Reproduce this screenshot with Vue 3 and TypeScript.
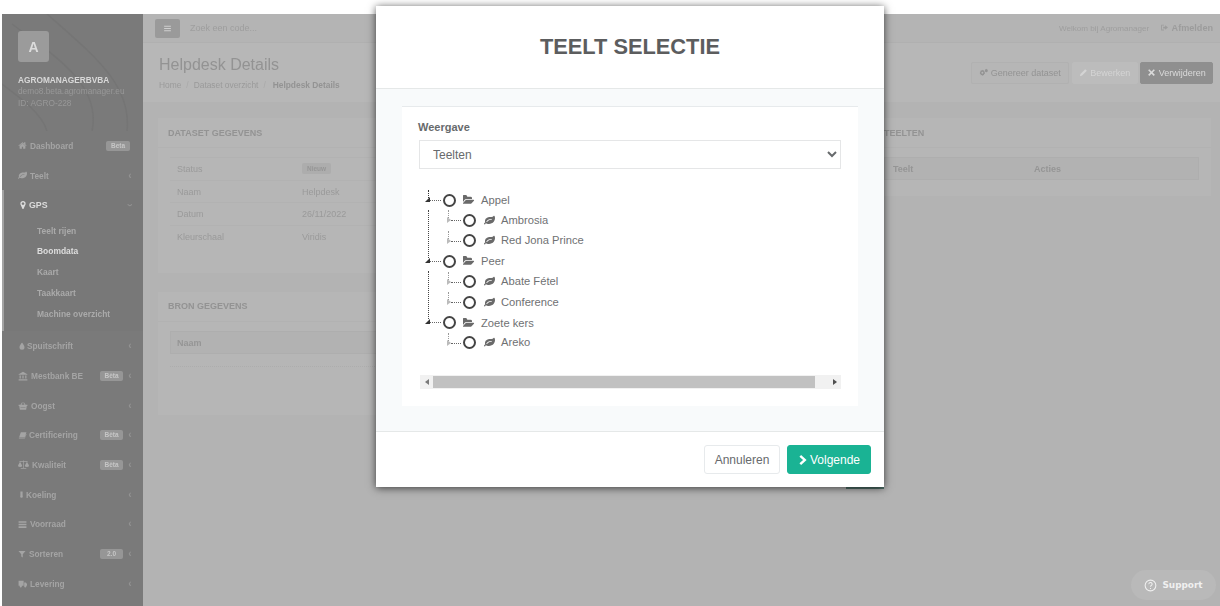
<script setup lang="ts">
interface Icon { vb: string; d: string }
const icons: Record<string, Icon> = {
  home: { vb: '0 0 1792 1792', d: 'M1472 992v480q0 26-19 45t-45 19h-384v-384h-256v384h-384q-26 0-45-19t-19-45v-480q0-1 .5-3t.5-3l575-474 575 474q1 2 1 6zm223-69l-62 74q-8 9-21 11h-3q-13 0-21-7l-692-577-692 577q-12 8-24 7-13-2-21-11l-62-74q-8-10-7-23.500t11-21.500l719-599q32-26 76-26t76 26l244 204v-195q0-14 9-23t23-9h192q14 0 23 9t9 23v408l219 182q10 8 11 21.500t-7 23.500z' },
  leaf: { vb: '0 0 1792 1792', d: 'M1280 704q0-26-19-45t-45-19q-172 0-318 49.500t-259.500 134-235.500 219.500q-19 21-19 45 0 26 19 45t45 19q24 0 45-19 27-24 74-71t67-66q137-124 268.500-176t313.500-52q26 0 45-19t19-45zm512-198q0 95-20 193-46 224-184.500 383t-357.500 268q-214 108-438 108-148 0-286-47-15-5-88-42t-96-37q-16 0-39.500 32t-45 70-52.500 70-60 32q-30 0-51-11t-31-24-27-42q-2-4-6-11t-5.500-10-3-9.500-1.500-13.500q0-35 31-73.500t68-65.500 68-56 31-48q0-4-14-38t-16-44q-9-51-9-104 0-115 43.500-220t119-184.500 170.500-139 204-95.500q55-18 145-25.500t179.500-9 178.500-6 163.500-24 113.500-56.500l29.500-29.500 29.500-28 27-20 36.500-16 43.500-4.500q39 0 70.500 46t47.500 112 24 124 8 96z' },
  folder: { vb: '0 128 1920 1536', d: 'M1781 931q0 35-31 66l-336 396q-43 51-120.500 86.500t-143.500 35.500h-1088q-34 0-60.500-13t-26.500-43q0-35 31-66l336-396q43-51 120.500-86.500t143.500-35.500h1088q34 0 60.500 13t26.500 43zm-343-344v160h-832q-94 0-197 47.500t-164 119.500l-337 396-5 6q0-4-.5-12.500t-.5-12.500v-960q0-92 66-158t158-66h320q92 0 158 66t66 158v32h544q92 0 158 66t66 158z' },
  marker: { vb: '0 128 1024 1536', d: 'M768 640q0-106-75-181t-181-75-181 75-75 181 75 181 181 75 181-75 75-181zm256 0q0 109-33 179l-364 774q-16 33-47.500 52t-67.500 19-67.500-19-46.500-52l-365-774q-33-70-33-179 0-212 150-362t362-150 362 150 150 362z' },
  tint: { vb: '0 0 16 16', d: 'M8 1C8 1 3 7 3 10.500a5 5 0 0 0 10 0C13 7 8 1 8 1z' },
  bank: { vb: '0 0 16 16', d: 'M8 1l7 4v1H1V5zM2.500 7h2v5h-2zM7 7h2v5H7zM11.500 7h2v5h-2zM1 13h14v2H1z' },
  basket: { vb: '0 0 16 16', d: 'M1 6h3l2.500-4 1 .6L5.500 6h5L8.500 2.600l1-.6L12 6h3v2h-1l-1 6H3L2 8H1zM4 9.500v1h8v-1z' },
  book: { vb: '0 0 16 16', d: 'M5 2h10l-3 9H2zM1.500 12H12l2.500-7 .5 1-3 7.500H2a1.500 1.500 0 0 1-.5-1.500z' },
  scale: { vb: '0 0 16 16', d: 'M7.500 2h1v11h-1zM2 3h12v1H2zM4 13h8v1H4zM3 4L0 9.500a3 2.200 0 0 0 6 0zM3 5.500L1.200 9h3.600zM13 4l-3 5.500a3 2.200 0 0 0 6 0zM13 5.500L11.200 9h3.600z' },
  cold: { vb: '0 0 16 16', d: 'M5.500 1h5v9.500a3.300 3.300 0 0 1 .5 2 3 3 0 0 1-6 0 3.300 3.300 0 0 1 .5-2z' },
  list: { vb: '0 0 16 16', d: 'M1 2h14v3H1zM1 6.500h14v3H1zM1 11h14v3H1z' },
  filter: { vb: '0 0 16 16', d: 'M1 2h14L9.500 8.500V15l-3-2V8.500z' },
  truck: { vb: '0 0 16 16', d: 'M1 3h9v9H1zM11 6h3l2 3v3h-5zM4.500 11a2 2 0 1 1 0 3.900 2 2 0 0 1 0-3.900zM12.500 11a2 2 0 1 1 0 3.900 2 2 0 0 1 0-3.900z' },
  gears: { vb: '0 0 16 16', d: 'M6 3l1 1.500 1.700-.3.500 2 1.500.8-.8 1.500.8 1.500-1.500.8-.5 2-1.700-.3L6 14l-1-1.500-1.700.3-.5-2L1.300 10l.8-1.500L1.300 7l1.500-.8.500-2 1.700.3zM6 6.800a1.700 1.700 0 1 0 0 3.400 1.700 1.700 0 0 0 0-3.400zM13 1.500l.6.900 1-.2.300 1.100.9.500-.5.900.5.900-.9.500-.3 1.100-1-.2-.6.900-.6-.9-1 .2-.3-1.100-.9-.5.500-.9-.5-.9.900-.5.300-1.100 1 .2z' },
  pencil: { vb: '0 0 16 16', d: 'M11 2l3 3-8.500 8.500-4 1 1-4z' },
  times: { vb: '0 0 16 16', d: 'M4 2l4 4 4-4 2 2-4 4 4 4-2 2-4-4-4 4-2-2 4-4-4-4z' },
  signout: { vb: '0 0 16 16', d: 'M2 3h5v1.500H3.500v7H7V13H2zM9 4l5 4-5 4V9.500H5.500v-3H9z' },
  bars: { vb: '0 0 16 16', d: 'M2 3h12v2H2zM2 7h12v2H2zM2 11h12v2H2z' },
  next: { vb: '0 0 16 16', d: 'M4.500 .8L12.500 8l-8 7.200-2.400-2.400L7.400 8 2.100 3.200z' },
}

interface MenuItem { label: string; icon: string; slot: number; size: number; badge?: string; wide?: boolean }
const menuTop: MenuItem[] = [
  { label: 'Dashboard', icon: 'home', slot: 12, size: 9, badge: 'Beta', wide: true },
  { label: 'Teelt', icon: 'leaf', slot: 12, size: 9 },
]
const subItems = ['Teelt rijen', 'Boomdata', 'Kaart', 'Taakkaart', 'Machine overzicht']
const menuBottom: MenuItem[] = [
  { label: 'Spuitschrift', icon: 'tint', slot: 9, size: 8 },
  { label: 'Mestbank BE', icon: 'bank', slot: 13, size: 10, badge: 'Bèta' },
  { label: 'Oogst', icon: 'basket', slot: 13, size: 10 },
  { label: 'Certificering', icon: 'book', slot: 11, size: 9, badge: 'Bèta' },
  { label: 'Kwaliteit', icon: 'scale', slot: 14, size: 11, badge: 'Bèta' },
  { label: 'Koeling', icon: 'cold', slot: 8, size: 7 },
  { label: 'Voorraad', icon: 'list', slot: 12, size: 9 },
  { label: 'Sorteren', icon: 'filter', slot: 11, size: 8, badge: '2.0' },
  { label: 'Levering', icon: 'truck', slot: 12, size: 9 },
]
const details = [
  { k: 'Status', v: 'Nieuw', tag: true },
  { k: 'Naam', v: 'Helpdesk' },
  { k: 'Datum', v: '26/11/2022' },
  { k: 'Kleurschaal', v: 'Viridis' },
]
const tree = [
  { name: 'Appel', kids: ['Ambrosia', 'Red Jona Prince'] },
  { name: 'Peer', kids: ['Abate Fétel', 'Conference'] },
  { name: 'Zoete kers', kids: ['Areko'] },
]
</script>

<template>
  <div class="screen">
    <div class="app">
      <aside class="side">
        <div class="brand">
          <svg class="waves" viewBox="0 0 141 117" fill="none">
            <path d="M10 10C50 40 100 70 90 117M45 0C90 40 130 70 125 117M0 70C20 85 40 100 45 117" />
          </svg>
          <div class="logo">A</div>
          <div class="company">AGROMANAGERBVBA</div>
          <div class="muted">demo8.beta.agromanager.eu</div>
          <div class="muted">ID: AGRO-228</div>
        </div>
        <nav>
          <a v-for="m in menuTop" :key="m.label" class="item">
            <span class="slot" :style="{ width: m.slot + 'px' }">
              <svg class="ic" :style="{ fontSize: m.size + 'px' }" :viewBox="icons[m.icon].vb"><path :d="icons[m.icon].d" /></svg>
            </span>
            <span class="lbl">{{ m.label }}</span>
            <span v-if="m.badge" class="badge" :class="{ wide: m.wide }">{{ m.badge }}</span>
            <span v-if="!m.wide" class="chev">‹</span>
          </a>
          <div class="group">
            <a class="item active">
              <span class="slot gps"><svg class="ic" :viewBox="icons.marker.vb"><path :d="icons.marker.d" /></svg></span>
              <span class="lbl">GPS</span>
              <span class="chev down">‹</span>
            </a>
            <a v-for="(s, i) in subItems" :key="s" class="sub" :class="{ on: i === 1 }">{{ s }}</a>
          </div>
          <a v-for="m in menuBottom" :key="m.label" class="item">
            <span class="slot" :style="{ width: m.slot + 'px' }">
              <svg class="ic" :style="{ fontSize: m.size + 'px' }" :viewBox="icons[m.icon].vb"><path :d="icons[m.icon].d" /></svg>
            </span>
            <span class="lbl">{{ m.label }}</span>
            <span v-if="m.badge" class="badge">{{ m.badge }}</span>
            <span class="chev">‹</span>
          </a>
        </nav>
      </aside>

      <main class="main">
        <header class="topbar">
          <button class="burger"><svg class="ic" :viewBox="icons.bars.vb"><path :d="icons.bars.d" /></svg></button>
          <span class="search">Zoek een code...</span>
          <span class="welcome">Welkom bij Agromanager</span>
          <span class="logout">
            <svg class="ic" :viewBox="icons.signout.vb"><path :d="icons.signout.d" /></svg> Afmelden
          </span>
        </header>
        <section class="heading">
          <div>
            <h2>Helpdesk Details</h2>
            <div class="crumbs">
              <span>Home</span><i>/</i><span>Dataset overzicht</span><i>/</i><b>Helpdesk Details</b>
            </div>
          </div>
          <div class="actions">
            <button class="act plain"><svg class="ic" :viewBox="icons.gears.vb"><path :d="icons.gears.d" /></svg> Genereer dataset</button>
            <button class="act light"><svg class="ic" :viewBox="icons.pencil.vb"><path :d="icons.pencil.d" /></svg> Bewerken</button>
            <button class="act dark"><svg class="ic" :viewBox="icons.times.vb"><path :d="icons.times.d" /></svg> Verwijderen</button>
          </div>
        </section>
        <section class="content">
          <div class="col">
            <article class="card first">
              <h5>DATASET GEGEVENS</h5>
              <div class="card-body">
                <div v-for="d in details" :key="d.k" class="row">
                  <span class="key">{{ d.k }}</span>
                  <span v-if="d.tag" class="tag">{{ d.v }}</span>
                  <span v-else>{{ d.v }}</span>
                </div>
              </div>
            </article>
            <article class="card second">
              <h5>BRON GEGEVENS</h5>
              <div class="card-body">
                <div class="thead"><span>Naam</span></div>
                <div class="dots"></div>
              </div>
            </article>
          </div>
          <div class="col narrow">
            <article class="card third">
              <h5>TEELTEN</h5>
              <div class="card-body">
                <div class="thead split"><span>Teelt</span><span>Acties</span></div>
              </div>
            </article>
          </div>
        </section>
      </main>
    </div>

    <div class="peek"></div>
    <button class="support">
      <svg class="q" viewBox="0 0 16 16" fill="none"><circle cx="8" cy="8" r="6.600" /><path d="M6 6.300a2 2 0 1 1 3 1.700c-.7.400-1 .8-1 1.600M8 11v1.400" /></svg>
      Support
    </button>

    <div class="modal">
      <header class="m-head"><h3>TEELT SELECTIE</h3></header>
      <div class="m-body">
        <div class="panel">
          <label class="field-label" for="view">Weergave</label>
          <select id="view" class="select"><option>Teelten</option></select>
          <div class="tree">
            <div v-for="(n, idx) in tree" :key="n.name" class="node">
              <div class="t-row">
                <span class="stem" :class="{ head: idx === 0 }"></span>
                <span class="tri"></span>
                <span class="dash"></span>
                <span class="radio"></span>
                <svg class="t-folder" :viewBox="icons.folder.vb"><path :d="icons.folder.d" /></svg>
                <span class="t-text">{{ n.name }}</span>
              </div>
              <div v-for="k in n.kids" :key="k" class="t-row kid">
                <span class="kstem"></span>
                <span class="otri"></span>
                <span class="dash"></span>
                <span class="radio"></span>
                <svg class="t-leaf" :viewBox="icons.leaf.vb"><path :d="icons.leaf.d" /></svg>
                <span class="t-text">{{ k }}</span>
              </div>
              <span v-if="idx < tree.length - 1" class="run"></span>
            </div>
          </div>
          <div class="hbar">
            <span class="arrow left"></span>
            <span class="thumb"></span>
            <span class="arrow right"></span>
          </div>
        </div>
      </div>
      <footer class="m-foot">
        <button class="btn ghost">Annuleren</button>
        <button class="btn primary">
          <svg class="ic-next" :viewBox="icons.next.vb"><path :d="icons.next.d" /></svg>
          Volgende
        </button>
      </footer>
    </div>
  </div>
</template>

<style>
html, body { margin: 0; background: #fff; }
</style>

<style scoped>
* { box-sizing: border-box; }
.screen {
  position: relative; width: 1220px; height: 606px; overflow: hidden;
  padding: 14px 0 0 2px; background: #fff;
  font-family: "Liberation Sans", Arial, sans-serif; color: #9a9a9a;
}
.ic { width: 1em; height: 1em; fill: currentColor; flex: none; vertical-align: -1px; }
.app { display: flex; height: 592px; filter: blur(.45px); }

/* sidebar */
.side { width: 141px; flex: none; background: #7a7a7a; color: #a2a2a2; font-size: 9.2px; overflow: hidden; }
.brand { position: relative; height: 117px; padding: 17px 16px 0; }
.waves { position: absolute; inset: 0; width: 141px; height: 117px; }
.waves path { stroke: #757575; stroke-width: 1.500; }
.logo {
  position: relative; width: 31px; height: 31px; border-radius: 3px; background: #9b9b9b; color: #dcdcdc;
  font-weight: 700; font-size: 14px; display: flex; align-items: center; justify-content: center; margin-bottom: 13px;
}
.company { position: relative; font-weight: 700; font-size: 8.300px; color: #d8d8d8; line-height: 11px; }
.muted { position: relative; font-size: 8.300px; line-height: 11.500px; color: #989898; white-space: nowrap; }
.item { display: flex; align-items: center; height: 29.700px; padding: 0 11px 0 16px; font-weight: 700; font-size: 8.300px; color: #a4a4a4; }
.slot { flex: none; display: flex; align-items: center; justify-content: flex-start; }
.slot.gps { width: 11px; padding-left: 1px; font-size: 8px; }
.lbl { flex: 1; white-space: nowrap; }
.badge { width: 23px; height: 10px; line-height: 10px; border-radius: 2px; background: #969696; color: #c6c6c6; font-size: 6.500px; text-align: center; flex: none; margin-right: 3px; }
.badge.wide { width: 24px; margin-right: 2px; }
.chev { width: 4px; margin-left: 2px; font-size: 10px; line-height: 10px; color: #939393; text-align: center; flex: none; }
.chev.down { transform: rotate(-90deg); }
.group { background: #787878; border-left: 2px solid #a3a3a3; height: 141px; }
.group .item { padding-left: 14px; color: #dcdcdc; height: 30.200px; font-size: 8.800px; }
.sub { display: block; height: 20.800px; line-height: 20.800px; padding-left: 33px; font-size: 8.450px; font-weight: 700; color: #aaaaaa; }
.sub.on { color: #dedede; }

/* main */
.main { flex: 1; min-width: 0; background: #b3b3b3; display: flex; flex-direction: column; }
.topbar { height: 29px; display: flex; align-items: center; padding: 0 7px 0 12px; background: #b4b4b4; border-bottom: 1px solid #b0b0b0; font-size: 9px; }
.burger { width: 25px; height: 19px; border: 0; border-radius: 2px; background: #9a9a9a; color: #cfcfcf; font-size: 9px; padding: 0; margin-right: 10px; display: flex; align-items: center; justify-content: center; }
.search { color: #9e9e9e; flex: 1; }
.welcome { color: #9e9e9e; margin-right: 11px; font-size: 8.100px; }
.logout { color: #9c9c9c; font-weight: 700; font-size: 9.100px; }
.heading { height: 60px; padding: 12px 7px 0 16px; background: #b7b7b7; display: flex; justify-content: space-between; align-items: flex-start; border-bottom: 1px solid #b3b3b3; }
.heading h2 { margin: 0; font-weight: 400; font-size: 16px; line-height: 19px; color: #939393; }
.crumbs { margin-top: 6px; font-size: 8.400px; line-height: 11px; color: #9a9a9a; display: flex; gap: 5px; }
.crumbs i { font-style: normal; color: #a9a9a9; }
.crumbs b { margin-left: 2px; color: #939393; }
.actions { display: flex; gap: 2.500px; margin-top: 7px; }
.act { height: 22px; border: 1px solid #b1b1b1; border-radius: 2px; font: 9px "Liberation Sans", Arial, sans-serif; padding: 0 6px; white-space: nowrap; }
.act .ic { font-size: 9px; }
.act.plain { width: 98px; background: #b6b6b6; color: #939393; }
.act.light { width: 66px; background: #bcbcbc; border-color: #bcbcbc; color: #d4d4d4; }
.act.dark { width: 73px; background: #8f8f8f; border-color: #8f8f8f; color: #dadada; }
.content { flex: 1; display: flex; gap: 10px; padding: 14px 7px 0 14px; }
.col { width: 707px; display: flex; flex-direction: column; gap: 17px; }
.col.narrow { width: 338px; flex: none; }
.card { background: #b6b6b6; border: 1px solid #b3b3b3; font-size: 9px; }
.card h5 { margin: 0; height: 30px; line-height: 31px; padding-left: 10px; font-size: 9px; font-weight: 700; color: #939393; border-bottom: 1px solid #b2b2b2; }
.second h5 { line-height: 28px; }
.card-body { padding: 10px 12px; }
.first { height: 157px; }
.second { height: 125px; }
.third { height: 80px; }
.third h5 { padding-left: 9px; }
.first .card-body { padding-top: 9px; }
.second .card-body { padding-top: 9px; }
.third .card-body { padding: 9px 12px 9px 9px; }
.row { height: 22.700px; display: flex; align-items: center; padding-left: 7px; border-top: 1px solid #b2b2b2; color: #9a9a9a; }
.key { width: 125px; flex: none; }
.tag { height: 11px; line-height: 11px; padding: 0 5px; background: #adadad; border-radius: 2px; font-size: 6.500px; font-weight: 700; color: #969696; }
.thead { height: 23px; line-height: 22px; padding-left: 6px; background: #b2b2b2; border: 1px solid #aeaeae; color: #959595; font-weight: 700; }
.dots { margin-top: 12px; border-top: 1px dotted #adadad; }
.split { display: flex; padding-left: 8px; }
.split span:first-child { width: 141px; }

/* modal */
.modal {
  position: absolute; left: 376px; top: 6px; width: 508px; height: 481px; background: #fff;
  box-shadow: 0 1px 8px rgba(0, 0, 0, .68); display: flex; flex-direction: column; color: #676a6c;
}
.m-head { height: 83px; flex: none; border-bottom: 1px solid #e5e8e8; display: flex; align-items: center; justify-content: center; }
.m-head h3 { margin: 0; font-size: 21.800px; font-weight: 700; color: #5c5d5e; }
.m-body { flex: 1; background: #f8fafb; padding: 17px 26px 25px; }
.panel { height: 300px; background: #fff; border-top: 1px solid #e7eaec; padding: 13px 17px 0 17px; }
.field-label { display: block; margin-left: -1px; font-size: 11px; font-weight: 700; line-height: 14px; margin-bottom: 6px; }
.select {
  display: block; width: 422px; height: 29px; border: 1px solid #e5e6e7; background: #fff; color: #676a6c;
  font: 12px "Liberation Sans", Arial, sans-serif; padding-left: 9px; border-radius: 0; outline: 0;
}
.tree { margin-top: 21px; padding-left: 6px; font: 11.200px "Liberation Sans", Arial, sans-serif; color: #6f7173; }
.node { position: relative; }
.t-row { position: relative; display: flex; align-items: center; height: 20.400px; padding-left: 18px; }
.t-row.kid { padding-left: 38px; }
.kid .t-text { margin-top: -1px; }
.radio { width: 13px; height: 13px; border: 2.200px solid #444; border-radius: 50%; background: #fff; flex: none; margin-right: 7px; }
.t-folder { width: 12px; height: 10px; fill: #6a6a6a; margin: 0 6px 0 0; flex: none; }
.t-leaf { width: 13px; height: 11px; fill: #6a6a6a; margin: 0 5px 0 0; flex: none; }
.stem { position: absolute; left: 3px; top: 0; height: 8px; border-left: 1px dotted #333; display: none; }
.stem.head { display: block; }
.tri { position: absolute; left: 0; top: 7px; width: 0; height: 0; border-left: 5px solid transparent; border-bottom: 5px solid #333; }
.dash { position: absolute; left: 5px; top: 10px; width: 11px; border-top: 1px dotted #666; }
.kid .dash { left: 26px; width: 10px; }
.kstem { position: absolute; left: 23px; top: 0; height: 8px; border-left: 1px dotted #999; }
.otri { position: absolute; left: 22px; top: 7px; width: 0; height: 0; border-left: 4px solid #bbb; border-top: 3px solid transparent; border-bottom: 3px solid transparent; }
.run { position: absolute; left: 3px; top: 20px; bottom: -7px; border-left: 1px dotted #444; }
.hbar { display: flex; align-items: center; width: 421px; height: 14px; margin: 22px 0 0 1px; background: #f1f1f1; }
.thumb { width: 382px; height: 12px; background: #c1c1c1; }
.arrow { width: 13px; flex: none; position: relative; height: 13px; }
.arrow::after { content: ""; position: absolute; top: 3.500px; border-top: 3px solid transparent; border-bottom: 3px solid transparent; }
.arrow.left::after { left: 5px; border-right: 4px solid #7a7a7a; }
.arrow.right { margin-left: 13px; }
.arrow.right::after { left: 5px; border-left: 4px solid #505050; }
.m-foot { height: 56px; flex: none; border-top: 1px solid #e5e8e8; display: flex; justify-content: flex-end; align-items: flex-start; gap: 7px; padding: 13px 13px 0 0; }
.btn { height: 29px; border-radius: 3px; font: 12px "Liberation Sans", Arial, sans-serif; white-space: nowrap; padding: 0; }
.ghost { width: 76px; background: #fff; border: 1px solid #e7eaec; color: #676a6c; }
.primary { width: 84px; background: #1ab394; border: 1px solid #1ab394; color: #fff; display: flex; align-items: center; justify-content: center; gap: 1px; }
.ic-next { width: 11px; height: 14px; fill: #fff; }
.peek { position: absolute; left: 846px; top: 483px; width: 38px; height: 6px; background: #4f6f68; }

.support {
  position: absolute; left: 1131px; top: 570px; width: 85px; height: 30px; border: 0; border-radius: 15px;
  background: #b9b9b9; color: #f0f0f0; font: 700 8.900px "DejaVu Sans", sans-serif;
  display: flex; align-items: center; justify-content: center; gap: 5px; padding: 0;
}
.q { width: 13px; height: 13px; stroke: #f0f0f0; stroke-width: 1.300; }
</style>
